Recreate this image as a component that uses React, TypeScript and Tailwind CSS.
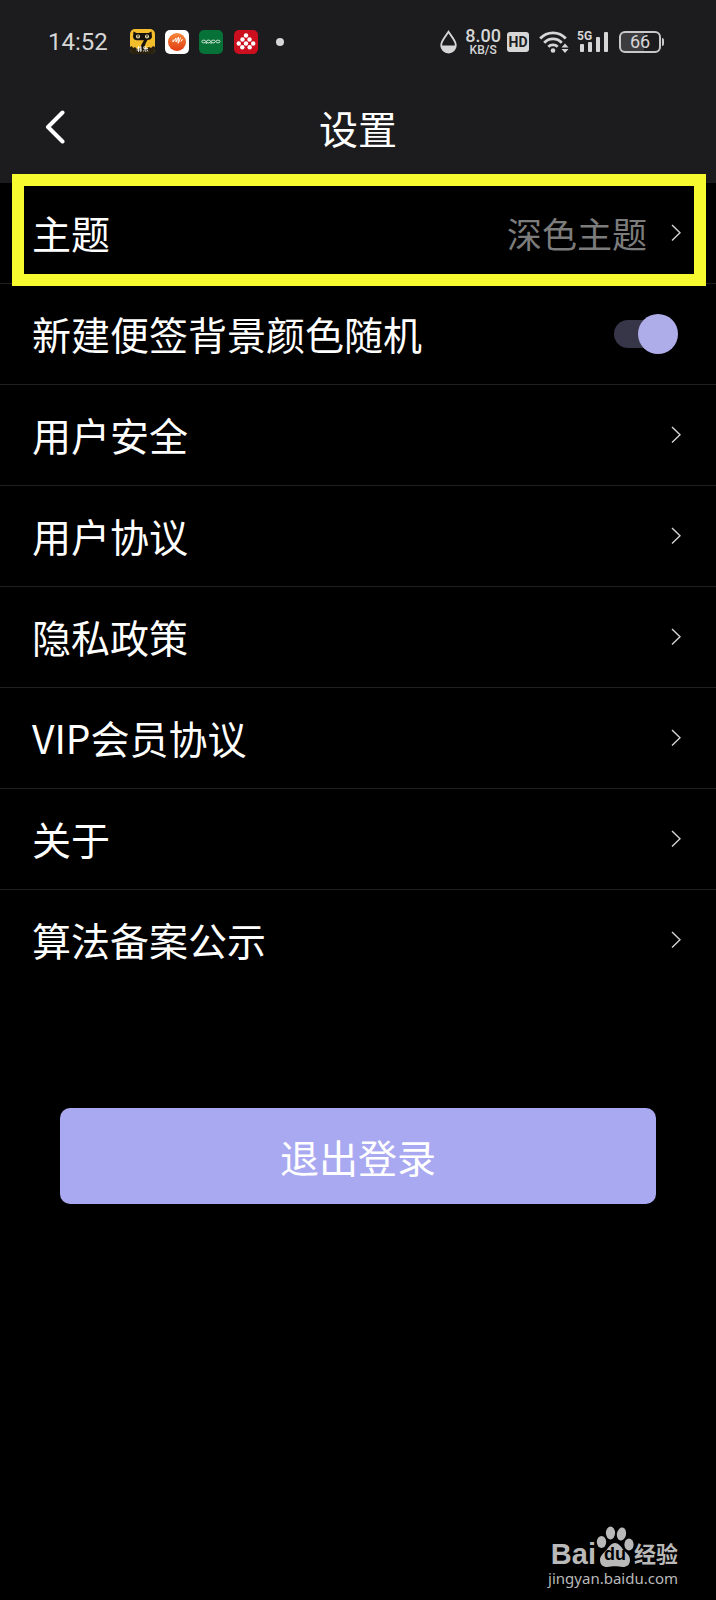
import type { ReactNode } from 'react';

function Chevron() {
  return (
    <svg width="10" height="18" viewBox="0 0 10 18" fill="none" stroke="#d4d4d4" strokeWidth="1.4" aria-hidden="true">
      <path d="M1 1 9 8.800 1 16.500" />
    </svg>
  );
}

function StatusBar() {
  return (
    <div className='flex h-[83px] items-center justify-between pl-12 pr-[52px] font-["Roboto",sans-serif] text-[#d6d6d6]'>
      <div className="flex items-center">
        <span className="text-2xl leading-6">14:52</span>
        <div className="ml-[22px] flex items-center gap-2.5">
          <svg width="25" height="25" viewBox="0 0 25 25" aria-hidden="true">
            <rect width="25" height="25" rx="5" fill="#f3bd2c" />
            <path d="M3.500 2.500 6.500 4h12l3-1.500.5 5.500c-.5 2-2 2.800-4.500 3-2 3-3 6-3.500 10h-4c.5-4 2-7 4-9.800H7c-2 0-3.500-1-4-3.200z" fill="#15130d" />
            <circle cx="8" cy="7.500" r="2" fill="#fbeeb8" />
            <circle cx="17" cy="7.500" r="2" fill="#fbeeb8" />
            <path d="M8 6v2.500M17 6v2.500" stroke="#15130d" strokeWidth="1.100" />
            <path d="M0 18l2-1 1 2 2-1 2 2 3-1 3 1 4-1 2-1 2 1 2-2 2 1v2c0 3-2 5-5 5H5c-3 0-5-2-5-5z" fill="#2a220f" />
            <path d="M7 19h4.500M8.500 17v6M10.800 17v6M6.500 21h5.500M14.500 17l-1 2M13.500 19.500h4.500M15.800 17v6M13.500 22.500l1-2M18 22.500l-1-2" stroke="#fff" strokeWidth=".8" />
          </svg>
          <svg width="24" height="24" viewBox="0 0 24 24" aria-hidden="true">
            <defs>
              <linearGradient id="ball" x1="0" y1="0" x2="0" y2="1">
                <stop offset="0" stopColor="#f58a3b" />
                <stop offset="1" stopColor="#e23b12" />
              </linearGradient>
            </defs>
            <rect width="24" height="24" rx="5" fill="#fff" />
            <circle cx="12" cy="12" r="9" fill="url(#ball)" />
            <path d="M8 9.500v2.500l3-4v4l2.500-5-.5 6.500M15.500 7.500 13.500 13M17.500 9l-1.500 2.500" fill="none" stroke="#fff" strokeWidth="1" />
          </svg>
          <span className="flex size-6 items-center justify-center rounded-[5px] bg-[#077237]">
            <svg width="20" height="8" viewBox="0 0 20 8" fill="none" stroke="#dcebe1" strokeWidth=".9" aria-hidden="true">
              <ellipse cx="2.800" cy="3.500" rx="2" ry="1.400" />
              <ellipse cx="7.500" cy="3.500" rx="2" ry="1.400" />
              <ellipse cx="12.300" cy="3.500" rx="2" ry="1.400" />
              <ellipse cx="17" cy="3.500" rx="2" ry="1.400" />
              <path d="M5.300 3.500V6M10.100 3.500V6" />
            </svg>
          </span>
          <svg className="ml-px" width="24" height="24" viewBox="0 0 24 24" aria-hidden="true">
            <rect width="24" height="24" rx="5" fill="#cb0f1f" />
            <g fill="#fff">
              <circle cx="12" cy="5.500" r="2.200" />
              <circle cx="8.500" cy="9.500" r="2.200" />
              <circle cx="15.500" cy="9.500" r="2.200" />
              <circle cx="4.800" cy="13.500" r="2.200" />
              <circle cx="12" cy="13.500" r="2.200" />
              <circle cx="19.200" cy="13.500" r="2.200" />
              <circle cx="8.300" cy="17.300" r="2.200" />
              <circle cx="15.700" cy="17.300" r="2.200" />
            </g>
          </svg>
        </div>
        <span className="ml-[18px] size-2 rounded-full bg-[#d6d6d6]" />
      </div>

      <div className="flex items-center">
        <svg width="17" height="24" viewBox="0 0 17 24" aria-hidden="true">
          <path d="M8.500 1.800C6 6 1.200 10.500 1.200 15.200a7.300 7.300 0 0 0 14.600 0C15.800 10.500 11 6 8.500 1.800z" fill="none" stroke="#d6d6d6" strokeWidth="1.800" />
          <path d="M1.200 15.500h14.600a7.300 7 0 0 1-14.600 0z" fill="#d6d6d6" />
        </svg>
        <div className="ml-2 flex flex-col items-center font-medium">
          <span className="text-lg leading-4">8.00</span>
          <span className="text-xs leading-3">KB/S</span>
        </div>
        <span className="ml-1.5 flex h-5 w-[22px] items-center justify-center rounded-[3px] bg-[#d6d6d6] text-sm font-bold text-[#1c1c1e]">HD</span>
        <svg className="ml-2.5" width="30" height="24" viewBox="0 0 30 24" fill="none" stroke="#d6d6d6" strokeWidth="2.800" aria-hidden="true">
          <path d="M1.200 8.500a17.500 17.500 0 0 1 25.600 0M5.200 12.800a12 12 0 0 1 17.600 0M9.300 16.800a6.800 6.800 0 0 1 9.400 0" />
          <circle cx="14" cy="20.500" r="2.300" fill="#d6d6d6" stroke="none" />
          <path d="M26 13.500l3.500 4h-7zM26 23l3.500-4h-7z" fill="#d6d6d6" stroke="none" />
        </svg>
        <div className="relative ml-2">
          <svg width="32" height="24" viewBox="0 0 32 24" fill="#d6d6d6" aria-hidden="true">
            <rect x="3" y="14" width="4" height="8" rx="1" />
            <rect x="11" y="12" width="4" height="10" rx="1" />
            <rect x="19" y="7" width="4" height="15" rx="1" />
            <rect x="27" y="2" width="4" height="20" rx="1" />
          </svg>
          <span className="absolute left-0 top-0 text-xs font-bold leading-3">5G</span>
        </div>
        <div className="ml-2.5 flex items-center gap-px">
          <span className="flex h-[22px] w-[42px] items-center justify-center rounded-md border-2 border-[#c8c8c8] bg-linear-to-r from-[#3c3c3e] from-60% to-[#1c1c1e] to-60% text-lg leading-4">66</span>
          <span className="h-2 w-0.5 rounded-r bg-[#c8c8c8]" />
        </div>
      </div>
    </div>
  );
}

function LinkRow({ label, value, children }: { label: string; value?: string; children?: ReactNode }) {
  return (
    <li className="relative border-b border-[#202020] last:border-b-0">
      <button type="button" className="flex h-[100px] w-full items-center justify-between pl-8 pr-[35px] text-left">
        <span className="pb-0.5 text-[39px] leading-[56px]">{label}</span>
        <span className="flex items-center gap-6">
          {value && <span className="text-[35px] leading-[56px] text-[#7c7c7c]">{value}</span>}
          <Chevron />
        </span>
      </button>
      {children}
    </li>
  );
}

function Watermark() {
  return (
    <footer className="mt-auto flex flex-col items-end pb-3 pr-[38px] text-[#b9b9b9]">
      <div className="flex items-end">
        <span className='font-["Liberation_Sans",sans-serif] text-[29px] font-bold leading-7'>Bai</span>
        <div className="relative">
          <svg width="38" height="42" viewBox="0 0 38 42" fill="#b9b9b9" aria-hidden="true">
            <ellipse cx="5.500" cy="16" rx="4.700" ry="6" />
            <ellipse cx="14.500" cy="7" rx="4.600" ry="6.500" />
            <ellipse cx="25.500" cy="8" rx="4.600" ry="6.500" transform="rotate(10 25.500 8)" />
            <ellipse cx="33" cy="18.500" rx="4.600" ry="6" />
            <path d="M19 17c4 0 6 4 9 7.500 3 3 6 5 6 9.500 0 5-3.500 7-7 7-3 0-5-.7-8-.7s-5 .7-8 .7c-4 0-7-2.500-7-7 0-4 3-6.500 6-9.500 3-3.500 5-7.500 9-7.500z" />
          </svg>
          <span className='absolute inset-x-0 bottom-1 text-center font-["Liberation_Sans",sans-serif] text-lg font-bold leading-5 text-black'>du</span>
        </div>
        <span className="pb-0.5 text-[22px] font-bold leading-7">经验</span>
      </div>
      <span className='font-["Noto_Sans",sans-serif] text-[15px] leading-5'>jingyan.baidu.com</span>
    </footer>
  );
}

export default function App() {
  const links = ['用户安全', '用户协议', '隐私政策', 'VIP会员协议', '关于', '算法备案公示'];

  return (
    <div lang="zh-CN" className='flex min-h-screen flex-col bg-black font-["Noto_Sans_CJK_SC",sans-serif] text-white'>
      <header className="bg-[#1c1c1e]">
        <StatusBar />
        <div className="grid h-[100px] grid-cols-[1fr_auto_1fr] items-center px-11 pb-3">
          <button type="button" aria-label="返回" className="justify-self-start">
            <svg width="22" height="34" viewBox="0 0 22 34" fill="none" stroke="#fff" strokeWidth="4" strokeLinecap="round" strokeLinejoin="round" aria-hidden="true">
              <path d="M18.500 2.500 4 17l14.500 14.500" />
            </svg>
          </button>
          <h1 className="text-[39px] leading-[56px]">设置</h1>
        </div>
      </header>

      <main>
        <ul>
          <LinkRow label="主题" value="深色主题">
            {/* highlight frame */}
            <span className="pointer-events-none absolute -bottom-[3px] -top-[9px] left-3 right-2.5 z-10 border-12 border-[#f8fa30]" />
          </LinkRow>

          <li className="border-b border-[#202020]">
            <label className="flex h-[100px] items-center justify-between pl-8 pr-[38px]">
              <span className="pb-0.5 text-[39px] leading-[56px]">新建便签背景颜色随机</span>
              <input
                type="checkbox"
                role="switch"
                defaultChecked
                className="relative h-10 w-16 appearance-none before:absolute before:left-0 before:top-1.5 before:h-7 before:w-14 before:rounded-full before:bg-[#373548] after:absolute after:left-0 after:top-0 after:size-10 after:rounded-full after:bg-[#afade9] checked:after:left-6"
              />
            </label>
          </li>

          {links.map((label) => (
            <LinkRow key={label} label={label} />
          ))}
        </ul>

        <div className="mb-10 mt-[118px] px-[60px]">
          <button type="button" className="h-24 w-full rounded-[10px] bg-[#a9a9f1] text-[39px] leading-[56px]">
            退出登录
          </button>
        </div>
      </main>

      <Watermark />
    </div>
  );
}
